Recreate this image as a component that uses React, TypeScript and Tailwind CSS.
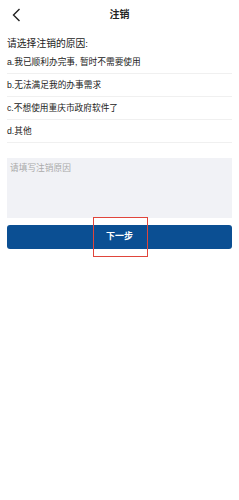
import { useState } from 'react';

const REASONS = [
  'a.我已顺利办完事, 暂时不需要使用',
  'b.无法满足我的办事需求',
  'c.不想使用重庆市政府软件了',
  'd.其他',
];

const FONT = { fontFamily: '"Liberation Sans", "Noto Sans CJK SC", sans-serif' };

export default function App() {
  const [reason, setReason] = useState('');

  return (
    <div className="relative w-[239px] min-h-[500px] bg-white text-[#222]" style={FONT}>
      <div className="flex h-[30px] items-center">
        <div className="flex w-[40px] items-center pl-[12px]">
          <svg width="9" height="14" viewBox="0 0 9 14" fill="none">
            <polyline points="7.5,1 1.5,7 7.5,13" stroke="#222" strokeWidth="1.4" />
          </svg>
        </div>
        <div className="flex-1 text-center text-[10px] font-bold leading-[14px]">注销</div>
        <div className="w-[40px]" />
      </div>

      <div className="px-[7px]">
        <div className="mt-[7px] h-[14px] text-[9.8px] leading-[14px]">请选择注销的原因:</div>
        {REASONS.map(r => (
          <div key={r} className="flex h-[23px] items-center border-b border-[#f0f0f0] pt-[2px] text-[8.7px]">
            {r}
          </div>
        ))}

        <textarea
          value={reason}
          onChange={e => setReason(e.target.value)}
          placeholder="请填写注销原因"
          className="mt-[15px] block h-[60px] w-full resize-none bg-[#f1f2f6] px-[3px] pt-[4px] text-[8.7px] leading-[12px] outline-none placeholder:text-[#aaaaaa]"
        />

        <button className="mt-[7px] flex h-[24px] w-full items-center justify-center rounded-[3px] bg-[#0b4f93] text-[9px] font-bold text-white">
          下一步
        </button>
      </div>

      <div className="absolute left-[93px] top-[217px] h-[40px] w-[55px] border border-[#e0453b]" />
    </div>
  );
}
